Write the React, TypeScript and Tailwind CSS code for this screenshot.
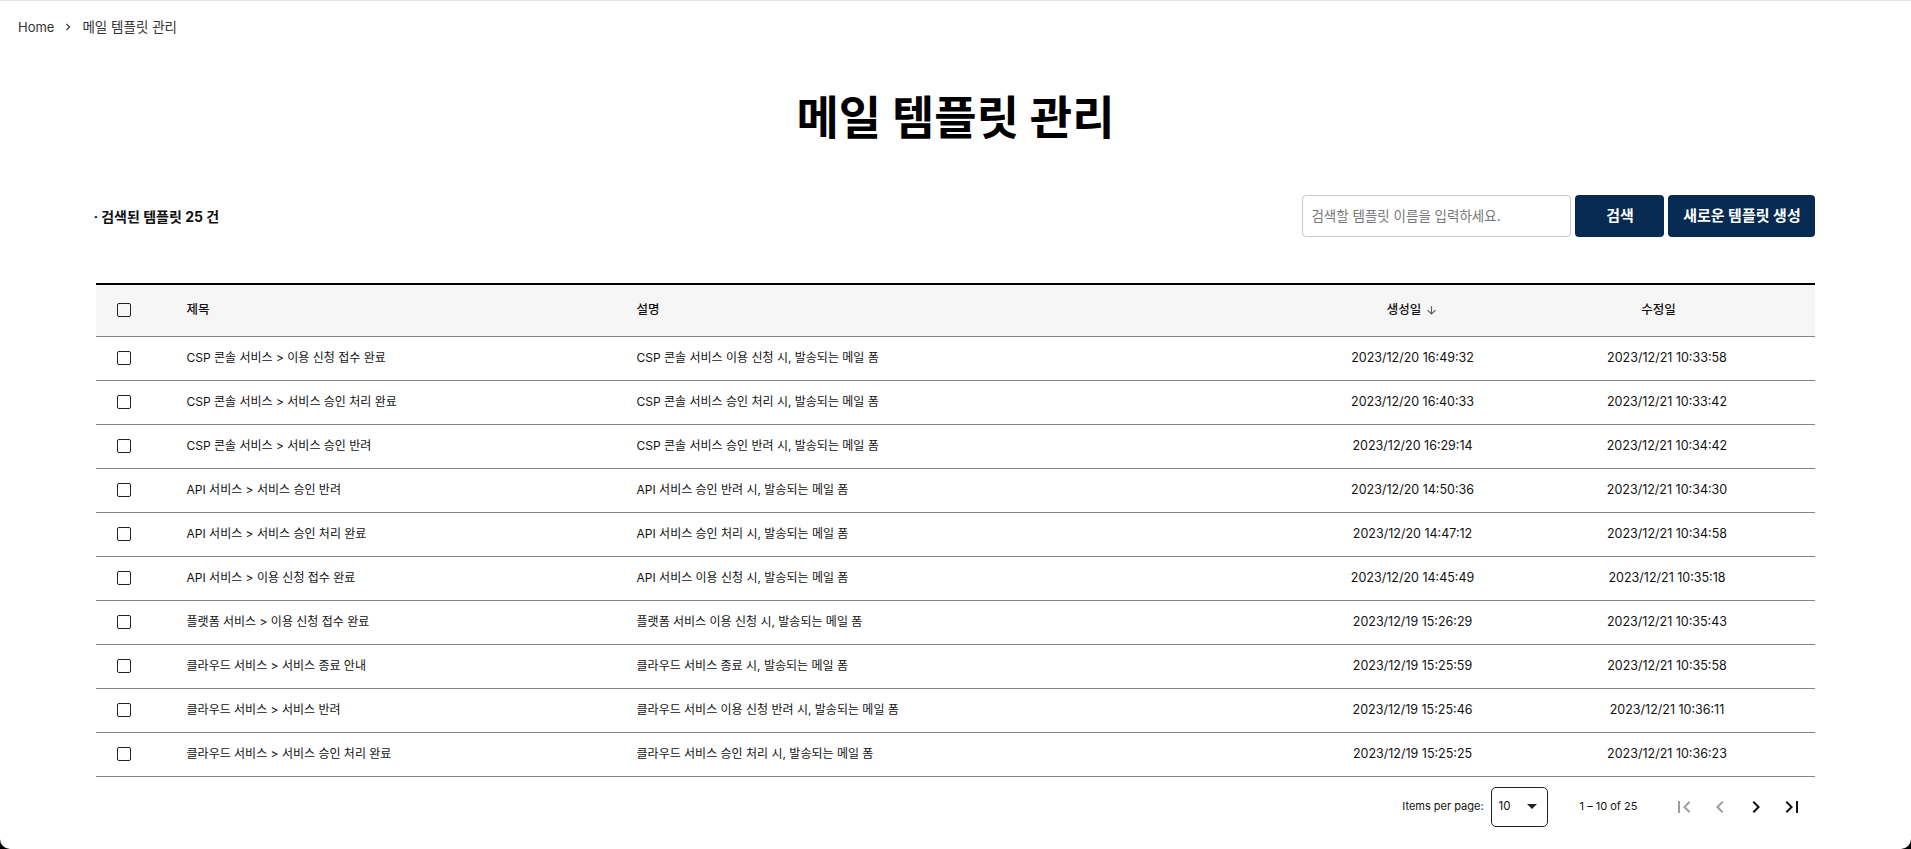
import React from 'react';

const FONT = "font-['Inter','Noto_Sans_CJK_KR',sans-serif]";

interface ITemplate {
  title: string;
  description: string;
  createdAt: string;
  updatedAt: string;
}

const templates: ITemplate[] = [
  { title: 'CSP 콘솔 서비스 > 이용 신청 접수 완료', description: 'CSP 콘솔 서비스 이용 신청 시, 발송되는 메일 폼', createdAt: '2023/12/20 16:49:32', updatedAt: '2023/12/21 10:33:58' },
  { title: 'CSP 콘솔 서비스 > 서비스 승인 처리 완료', description: 'CSP 콘솔 서비스 승인 처리 시, 발송되는 메일 폼', createdAt: '2023/12/20 16:40:33', updatedAt: '2023/12/21 10:33:42' },
  { title: 'CSP 콘솔 서비스 > 서비스 승인 반려', description: 'CSP 콘솔 서비스 승인 반려 시, 발송되는 메일 폼', createdAt: '2023/12/20 16:29:14', updatedAt: '2023/12/21 10:34:42' },
  { title: 'API 서비스 > 서비스 승인 반려', description: 'API 서비스 승인 반려 시, 발송되는 메일 폼', createdAt: '2023/12/20 14:50:36', updatedAt: '2023/12/21 10:34:30' },
  { title: 'API 서비스 > 서비스 승인 처리 완료', description: 'API 서비스 승인 처리 시, 발송되는 메일 폼', createdAt: '2023/12/20 14:47:12', updatedAt: '2023/12/21 10:34:58' },
  { title: 'API 서비스 > 이용 신청 접수 완료', description: 'API 서비스 이용 신청 시, 발송되는 메일 폼', createdAt: '2023/12/20 14:45:49', updatedAt: '2023/12/21 10:35:18' },
  { title: '플랫폼 서비스 > 이용 신청 접수 완료', description: '플랫폼 서비스 이용 신청 시, 발송되는 메일 폼', createdAt: '2023/12/19 15:26:29', updatedAt: '2023/12/21 10:35:43' },
  { title: '클라우드 서비스 > 서비스 종료 안내', description: '클라우드 서비스 종료 시, 발송되는 메일 폼', createdAt: '2023/12/19 15:25:59', updatedAt: '2023/12/21 10:35:58' },
  { title: '클라우드 서비스 > 서비스 반려', description: '클라우드 서비스 이용 신청 반려 시, 발송되는 메일 폼', createdAt: '2023/12/19 15:25:46', updatedAt: '2023/12/21 10:36:11' },
  { title: '클라우드 서비스 > 서비스 승인 처리 완료', description: '클라우드 서비스 승인 처리 시, 발송되는 메일 폼', createdAt: '2023/12/19 15:25:25', updatedAt: '2023/12/21 10:36:23' },
];

const Checkbox = () => (
  <span className="block h-[14px] w-[14px] rounded-[2px] border-[1.5px] border-[#222]" />
);

const MatIcon = ({ d, disabled }: { d: string; disabled?: boolean }) => (
  <button className="flex h-[36px] w-[36px] items-center justify-center">
    <svg
      viewBox="0 0 24 24"
      className={disabled ? 'h-[24px] w-[24px] fill-[#9e9e9e]' : 'h-[24px] w-[24px] fill-[#111]'}
    >
      <path d={d} />
    </svg>
  </button>
);

const SortArrow = ({ hidden }: { hidden?: boolean }) => (
  <svg
    viewBox="0 0 24 24"
    className={hidden ? 'ml-[4px] h-[13px] w-[13px] opacity-0' : 'ml-[4px] h-[13px] w-[13px] fill-[#555]'}
  >
    <path d="M20 12l-1.41-1.41L13 16.17V4h-2v12.17l-5.58-5.59L4 12l8 8 8-8z" />
  </svg>
);

const App = () => {
  return (
    <div className={`h-screen w-full bg-black ${FONT}`}>
      <div className="flex h-full flex-col overflow-hidden rounded-b-[10px] border-t border-[#e2e2e2] bg-white">
        <nav className="flex items-center gap-[7px] px-[18px] pt-[16px] text-[13px] leading-[20px] text-[#333]">
          <span>Home</span>
          <svg viewBox="0 0 24 24" className="h-[14px] w-[14px] fill-[#333]">
            <path d="M10 6L8.59 7.41 13.17 12l-4.58 4.59L10 18l6-6z" />
          </svg>
          <span className="text-[13.5px]">메일 템플릿 관리</span>
        </nav>

        <h1 className="mt-[46px] text-center text-[46px] leading-[69px] font-bold text-black">
          메일 템플릿 관리
        </h1>

        <div className="mx-auto mt-[43px] flex w-[90%] flex-col">
          <div className="flex items-center justify-between">
            <p className="flex items-center text-[14px] font-bold text-[#111]">
              <span className="mr-[3px] -ml-[2px] text-[#0b2b52]">·</span>
              검색된 템플릿 25 건
            </p>
            <div className="flex items-center gap-[4px]">
              <input
                placeholder="검색할 템플릿 이름을 입력하세요."
                className="h-[42px] w-[269px] rounded-[4px] border border-[#c9c9c9] px-[8px] text-[13.5px] text-[#333] placeholder:text-[#777] outline-none"
              />
              <button className="h-[42px] w-[89px] rounded-[4px] bg-[#062a51] text-[15px] font-bold text-white">
                검색
              </button>
              <button className="h-[42px] w-[147px] rounded-[4px] bg-[#062a51] text-[15px] font-bold text-white">
                새로운 템플릿 생성
              </button>
            </div>
          </div>

          <table className="mt-[46px] w-full table-fixed border-collapse border-t-2 border-black text-[12px] text-[#111]">
            <colgroup>
              <col className="w-[91px]" />
              <col className="w-[450px]" />
              <col className="w-[646px]" />
              <col className="w-[260px]" />
              <col />
            </colgroup>
            <thead>
              <tr className="h-[52px] border-b border-[#858585] bg-[#f6f6f6] text-[12.5px]">
                <th className="pl-[21px] text-left">
                  <Checkbox />
                </th>
                <th className="text-left font-medium">제목</th>
                <th className="text-left font-medium">설명</th>
                <th className="font-medium">
                  <span className="inline-flex items-center">
                    생성일
                    <SortArrow />
                  </span>
                </th>
                <th className="pr-[24px] font-medium">
                  <span className="inline-flex items-center">
                    수정일
                    <SortArrow hidden />
                  </span>
                </th>
              </tr>
            </thead>
            <tbody>
              {templates.map((template, index) => (
                <tr key={index} className="h-[44px] border-b border-[#858585]">
                  <td className="pl-[21px]">
                    <Checkbox />
                  </td>
                  <td>{template.title}</td>
                  <td>{template.description}</td>
                  <td className="text-center text-[12.5px]">{template.createdAt}</td>
                  <td className="pr-[24px] text-center text-[12.5px]">{template.updatedAt}</td>
                </tr>
              ))}
            </tbody>
          </table>

          <div className="flex h-[60px] items-center justify-end pr-[5px] text-[11px] text-[#111]">
            <span className="mr-[7px]">Items per page:</span>
            <div className="flex h-[40px] w-[57px] items-center justify-between rounded-[5px] border border-[#222] pr-[10px] pl-[7px]">
              <span className="text-[11.5px]">10</span>
              <svg viewBox="0 0 10 5" className="h-[5px] w-[10px] fill-[#222]">
                <path d="M0 0l5 5 5-5z" />
              </svg>
            </div>
            <span className="mr-[29px] ml-[32px]">1 – 10 of 25</span>
            <MatIcon d="M18.41 16.59L13.82 12l4.59-4.59L17 6l-6 6 6 6zM6 6h2v12H6z" disabled />
            <MatIcon d="M15.41 7.41L14 6l-6 6 6 6 1.41-1.41L10.83 12z" disabled />
            <MatIcon d="M10 6L8.59 7.41 13.17 12l-4.58 4.59L10 18l6-6z" />
            <MatIcon d="M5.59 7.41L10.18 12l-4.59 4.59L7 18l6-6-6-6zM16 6h2v12h-2z" />
          </div>
        </div>
      </div>
    </div>
  );
};

export default App;
